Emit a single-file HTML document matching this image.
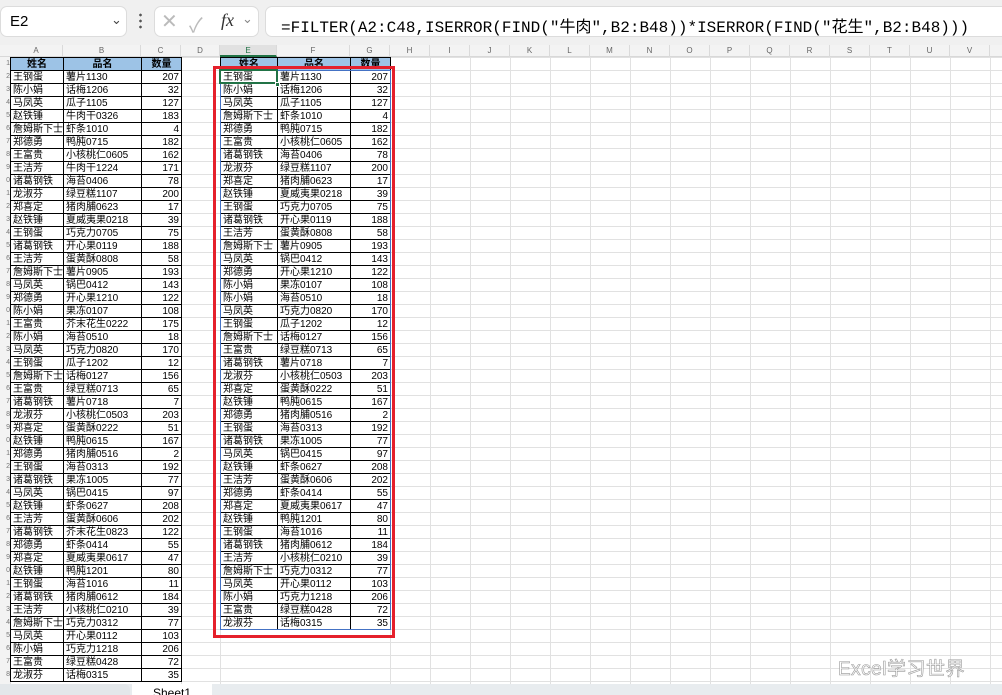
<!DOCTYPE html><html><head><meta charset="utf-8"><style>
*{margin:0;padding:0;box-sizing:border-box}
body{width:1002px;height:695px;overflow:hidden;background:#fff;font-family:"Liberation Sans","Noto Sans CJK SC",sans-serif;position:relative}
.top{position:absolute;left:0;top:0;width:1002px;height:45px;background:#f0f0f0}
.box{position:absolute;background:#fff;border:1px solid #dcdcdc;border-radius:7px}
.ch{position:absolute;top:45px;left:0;width:1002px;height:12px;background:#f3f3f3;border-bottom:1px solid #d8d8d8}
.ch span{position:absolute;top:0;height:12px;font-size:8px;color:#666;text-align:center;line-height:12px;border-right:1px solid #dadada}
.grid{position:absolute;left:0;top:57px;width:1002px;height:627px;background-image:linear-gradient(#e1e1e1 1px,transparent 1px);background-size:100% 13px}
.vl{position:absolute;top:57px;height:627px;width:1px;background:#e1e1e1}
.rn{position:absolute;left:0;top:57px;width:10px;font-size:7px;color:#777;text-align:right;line-height:13px;overflow:hidden;height:627px;background:#f3f3f3}
table{position:absolute;border-collapse:collapse;table-layout:fixed;font-size:10px}
td{height:13px;border:1px solid #000;padding:0 2px;line-height:11px;white-space:nowrap;overflow:hidden}
td:nth-child(3){text-align:right}
tr.h td{background:#9dc3e6;text-align:center;font-weight:bold}
.tabs{position:absolute;left:0;top:684px;width:1002px;height:11px;background:#e8ecef}
</style></head><body>
<div class="top"></div>
<div class="box" style="left:0;top:6px;width:127px;height:31px"><span style="position:absolute;left:9px;top:6px;font-size:15px">E2</span><span style="position:absolute;left:110px;top:5px;font-size:13px;color:#444">⌄</span></div>
<div style="position:absolute;left:139px;top:12px;width:3px;height:18px;background:radial-gradient(circle,#555 1.2px,transparent 1.5px) 0 0/3px 6px"></div>
<div class="box" style="left:154px;top:6px;width:105px;height:31px"><span style="position:absolute;left:6px;top:2px;font-size:20px;color:#bbb">✕</span><span style="position:absolute;left:34px;top:2px;font-size:20px;color:#bbb">✓</span><span style="position:absolute;left:66px;top:3px;font-size:18px;font-style:italic;font-family:'Liberation Serif',serif;color:#333">fx</span><span style="position:absolute;left:87px;top:4px;font-size:13px;color:#888">⌄</span></div>
<div class="box" style="left:265px;top:6px;width:745px;height:31px"><span style="position:absolute;left:15px;top:6px;font-size:16px;font-family:'Liberation Mono','Noto Sans CJK SC',monospace;white-space:nowrap">=FILTER(A2:C48,ISERROR(FIND("牛肉",B2:B48))*ISERROR(FIND("花生",B2:B48)))</span></div>
<div class="ch">
<span style="left:10px;width:53px">A</span><span style="left:63px;width:78px">B</span><span style="left:141px;width:40px">C</span><span style="left:181px;width:39px">D</span><span style="left:220px;width:57px;background:#e1e1e1;color:#217346;border-bottom:2px solid #217346">E</span><span style="left:277px;width:73px">F</span><span style="left:350px;width:40px">G</span>
<span style="left:390px;width:40px">H</span><span style="left:430px;width:40px">I</span><span style="left:470px;width:40px">J</span><span style="left:510px;width:40px">K</span><span style="left:550px;width:40px">L</span><span style="left:590px;width:40px">M</span><span style="left:630px;width:40px">N</span><span style="left:670px;width:40px">O</span><span style="left:710px;width:40px">P</span><span style="left:750px;width:40px">Q</span><span style="left:790px;width:40px">R</span><span style="left:830px;width:40px">S</span><span style="left:870px;width:40px">T</span><span style="left:910px;width:40px">U</span><span style="left:950px;width:40px">V</span><span style="left:990px;width:40px">W</span></div>
<div class="grid"></div>
<div class="vl" style="left:10px"></div><div class="vl" style="left:181px"></div><div class="vl" style="left:220px"></div><div class="vl" style="left:390px"></div><div class="vl" style="left:430px"></div><div class="vl" style="left:470px"></div><div class="vl" style="left:510px"></div><div class="vl" style="left:550px"></div><div class="vl" style="left:590px"></div><div class="vl" style="left:630px"></div><div class="vl" style="left:670px"></div><div class="vl" style="left:710px"></div><div class="vl" style="left:750px"></div><div class="vl" style="left:790px"></div><div class="vl" style="left:830px"></div><div class="vl" style="left:870px"></div><div class="vl" style="left:910px"></div><div class="vl" style="left:950px"></div><div class="vl" style="left:990px"></div>
<div class="rn">1<br>2<br>3<br>4<br>5<br>6<br>7<br>8<br>9<br>0<br>1<br>2<br>3<br>4<br>5<br>6<br>7<br>8<br>9<br>0<br>1<br>2<br>3<br>4<br>5<br>6<br>7<br>8<br>9<br>0<br>1<br>2<br>3<br>4<br>5<br>6<br>7<br>8<br>9<br>0<br>1<br>2<br>3<br>4<br>5<br>6<br>7<br>8</div>
<table style="left:10px;top:57px;width:171px"><colgroup><col style="width:53px"><col style="width:78px"><col style="width:40px"></colgroup>
<tr class="h"><td>姓名</td><td>品名</td><td style="text-align:center">数量</td></tr>
<tr><td>王钢蛋</td><td>薯片1130</td><td>207</td></tr>
<tr><td>陈小娟</td><td>话梅1206</td><td>32</td></tr>
<tr><td>马凤英</td><td>瓜子1105</td><td>127</td></tr>
<tr><td>赵铁锤</td><td>牛肉干0326</td><td>183</td></tr>
<tr><td>詹姆斯下士</td><td>虾条1010</td><td>4</td></tr>
<tr><td>郑德勇</td><td>鸭肫0715</td><td>182</td></tr>
<tr><td>王富贵</td><td>小核桃仁0605</td><td>162</td></tr>
<tr><td>王洁芳</td><td>牛肉干1224</td><td>171</td></tr>
<tr><td>诸葛钢铁</td><td>海苔0406</td><td>78</td></tr>
<tr><td>龙淑芬</td><td>绿豆糕1107</td><td>200</td></tr>
<tr><td>郑喜定</td><td>猪肉脯0623</td><td>17</td></tr>
<tr><td>赵铁锤</td><td>夏威夷果0218</td><td>39</td></tr>
<tr><td>王钢蛋</td><td>巧克力0705</td><td>75</td></tr>
<tr><td>诸葛钢铁</td><td>开心果0119</td><td>188</td></tr>
<tr><td>王洁芳</td><td>蛋黄酥0808</td><td>58</td></tr>
<tr><td>詹姆斯下士</td><td>薯片0905</td><td>193</td></tr>
<tr><td>马凤英</td><td>锅巴0412</td><td>143</td></tr>
<tr><td>郑德勇</td><td>开心果1210</td><td>122</td></tr>
<tr><td>陈小娟</td><td>果冻0107</td><td>108</td></tr>
<tr><td>王富贵</td><td>芥末花生0222</td><td>175</td></tr>
<tr><td>陈小娟</td><td>海苔0510</td><td>18</td></tr>
<tr><td>马凤英</td><td>巧克力0820</td><td>170</td></tr>
<tr><td>王钢蛋</td><td>瓜子1202</td><td>12</td></tr>
<tr><td>詹姆斯下士</td><td>话梅0127</td><td>156</td></tr>
<tr><td>王富贵</td><td>绿豆糕0713</td><td>65</td></tr>
<tr><td>诸葛钢铁</td><td>薯片0718</td><td>7</td></tr>
<tr><td>龙淑芬</td><td>小核桃仁0503</td><td>203</td></tr>
<tr><td>郑喜定</td><td>蛋黄酥0222</td><td>51</td></tr>
<tr><td>赵铁锤</td><td>鸭肫0615</td><td>167</td></tr>
<tr><td>郑德勇</td><td>猪肉脯0516</td><td>2</td></tr>
<tr><td>王钢蛋</td><td>海苔0313</td><td>192</td></tr>
<tr><td>诸葛钢铁</td><td>果冻1005</td><td>77</td></tr>
<tr><td>马凤英</td><td>锅巴0415</td><td>97</td></tr>
<tr><td>赵铁锤</td><td>虾条0627</td><td>208</td></tr>
<tr><td>王洁芳</td><td>蛋黄酥0606</td><td>202</td></tr>
<tr><td>诸葛钢铁</td><td>芥末花生0823</td><td>122</td></tr>
<tr><td>郑德勇</td><td>虾条0414</td><td>55</td></tr>
<tr><td>郑喜定</td><td>夏威夷果0617</td><td>47</td></tr>
<tr><td>赵铁锤</td><td>鸭肫1201</td><td>80</td></tr>
<tr><td>王钢蛋</td><td>海苔1016</td><td>11</td></tr>
<tr><td>诸葛钢铁</td><td>猪肉脯0612</td><td>184</td></tr>
<tr><td>王洁芳</td><td>小核桃仁0210</td><td>39</td></tr>
<tr><td>詹姆斯下士</td><td>巧克力0312</td><td>77</td></tr>
<tr><td>马凤英</td><td>开心果0112</td><td>103</td></tr>
<tr><td>陈小娟</td><td>巧克力1218</td><td>206</td></tr>
<tr><td>王富贵</td><td>绿豆糕0428</td><td>72</td></tr>
<tr><td>龙淑芬</td><td>话梅0315</td><td>35</td></tr>
</table>
<table style="left:220px;top:57px;width:170px"><colgroup><col style="width:57px"><col style="width:73px"><col style="width:40px"></colgroup>
<tr class="h"><td>姓名</td><td>品名</td><td style="text-align:center">数量</td></tr>
<tr><td>王钢蛋</td><td>薯片1130</td><td>207</td></tr>
<tr><td>陈小娟</td><td>话梅1206</td><td>32</td></tr>
<tr><td>马凤英</td><td>瓜子1105</td><td>127</td></tr>
<tr><td>詹姆斯下士</td><td>虾条1010</td><td>4</td></tr>
<tr><td>郑德勇</td><td>鸭肫0715</td><td>182</td></tr>
<tr><td>王富贵</td><td>小核桃仁0605</td><td>162</td></tr>
<tr><td>诸葛钢铁</td><td>海苔0406</td><td>78</td></tr>
<tr><td>龙淑芬</td><td>绿豆糕1107</td><td>200</td></tr>
<tr><td>郑喜定</td><td>猪肉脯0623</td><td>17</td></tr>
<tr><td>赵铁锤</td><td>夏威夷果0218</td><td>39</td></tr>
<tr><td>王钢蛋</td><td>巧克力0705</td><td>75</td></tr>
<tr><td>诸葛钢铁</td><td>开心果0119</td><td>188</td></tr>
<tr><td>王洁芳</td><td>蛋黄酥0808</td><td>58</td></tr>
<tr><td>詹姆斯下士</td><td>薯片0905</td><td>193</td></tr>
<tr><td>马凤英</td><td>锅巴0412</td><td>143</td></tr>
<tr><td>郑德勇</td><td>开心果1210</td><td>122</td></tr>
<tr><td>陈小娟</td><td>果冻0107</td><td>108</td></tr>
<tr><td>陈小娟</td><td>海苔0510</td><td>18</td></tr>
<tr><td>马凤英</td><td>巧克力0820</td><td>170</td></tr>
<tr><td>王钢蛋</td><td>瓜子1202</td><td>12</td></tr>
<tr><td>詹姆斯下士</td><td>话梅0127</td><td>156</td></tr>
<tr><td>王富贵</td><td>绿豆糕0713</td><td>65</td></tr>
<tr><td>诸葛钢铁</td><td>薯片0718</td><td>7</td></tr>
<tr><td>龙淑芬</td><td>小核桃仁0503</td><td>203</td></tr>
<tr><td>郑喜定</td><td>蛋黄酥0222</td><td>51</td></tr>
<tr><td>赵铁锤</td><td>鸭肫0615</td><td>167</td></tr>
<tr><td>郑德勇</td><td>猪肉脯0516</td><td>2</td></tr>
<tr><td>王钢蛋</td><td>海苔0313</td><td>192</td></tr>
<tr><td>诸葛钢铁</td><td>果冻1005</td><td>77</td></tr>
<tr><td>马凤英</td><td>锅巴0415</td><td>97</td></tr>
<tr><td>赵铁锤</td><td>虾条0627</td><td>208</td></tr>
<tr><td>王洁芳</td><td>蛋黄酥0606</td><td>202</td></tr>
<tr><td>郑德勇</td><td>虾条0414</td><td>55</td></tr>
<tr><td>郑喜定</td><td>夏威夷果0617</td><td>47</td></tr>
<tr><td>赵铁锤</td><td>鸭肫1201</td><td>80</td></tr>
<tr><td>王钢蛋</td><td>海苔1016</td><td>11</td></tr>
<tr><td>诸葛钢铁</td><td>猪肉脯0612</td><td>184</td></tr>
<tr><td>王洁芳</td><td>小核桃仁0210</td><td>39</td></tr>
<tr><td>詹姆斯下士</td><td>巧克力0312</td><td>77</td></tr>
<tr><td>马凤英</td><td>开心果0112</td><td>103</td></tr>
<tr><td>陈小娟</td><td>巧克力1218</td><td>206</td></tr>
<tr><td>王富贵</td><td>绿豆糕0428</td><td>72</td></tr>
<tr><td>龙淑芬</td><td>话梅0315</td><td>35</td></tr>
</table>
<div style="position:absolute;left:220px;top:70px;width:171px;height:560px;border:1px solid #4472c4"></div>
<div style="position:absolute;left:219px;top:69px;width:59px;height:15px;border:2px solid #217346"></div>
<div style="position:absolute;left:275px;top:82px;width:5px;height:5px;background:#217346;border:1px solid #fff"></div>
<div style="position:absolute;left:213px;top:66px;width:182px;height:572px;border:3px solid #e5202b"></div>
<div class="tabs"><div style="position:absolute;left:0;top:0;width:130px;height:11px;background:#e3e7ea;border-radius:0 6px 0 0"></div><div style="position:absolute;left:132px;top:0;width:80px;height:11px;background:#fff;font-size:12px;line-height:18px;text-align:center;overflow:hidden">Sheet1</div></div>
<div style="position:absolute;left:838px;top:654px;font-size:19px;color:#fff;-webkit-text-stroke:0.6px #999;letter-spacing:0.5px;white-space:nowrap">Excel学习世界</div>
</body></html>
